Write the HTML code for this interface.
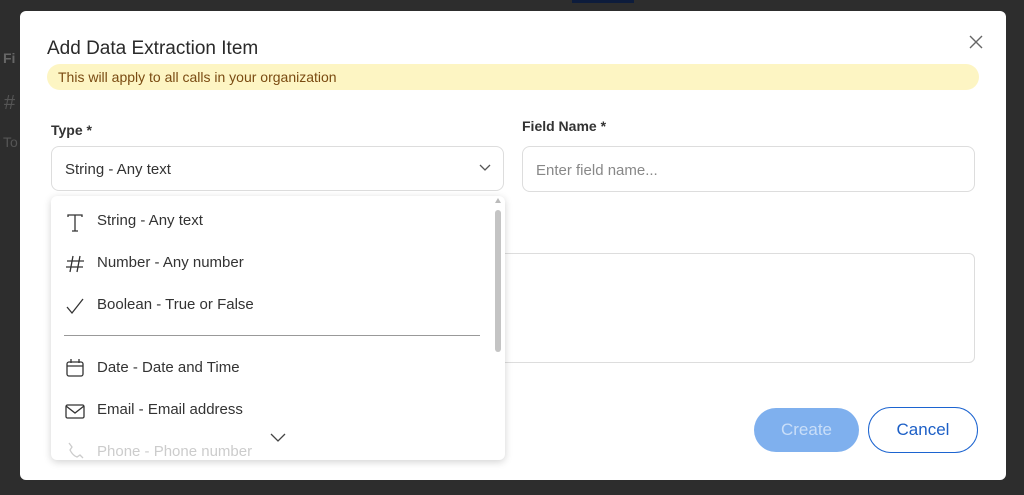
<!DOCTYPE html>
<html><head><style>
*{box-sizing:border-box;margin:0;padding:0}
body{width:1024px;height:495px;background:#2d2d2d;font-family:"Liberation Sans",sans-serif;position:relative;overflow:hidden}
.bgt{position:absolute;color:#555;font-size:14px}
.modal{position:absolute;left:20px;top:11px;width:986px;height:469px;background:#fff;border-radius:6px}
.a{position:absolute}
h1{position:absolute;left:27px;top:27px;font-size:19px;font-weight:normal;color:#2a2a2a}
.banner{left:27px;top:53px;width:932px;height:26px;background:#fdf5c3;border-radius:13px;color:#7a4b12;font-size:14px;padding:5px 11px}
.lbl{font-size:14px;font-weight:bold;color:#333}
.inp{border:1px solid #ddd;border-radius:8px;background:#fff}
.dd{left:31px;top:185px;width:454px;height:264px;background:#fff;border-radius:6px;box-shadow:0 2px 8px rgba(0,0,0,.18);overflow:hidden}
.it{position:absolute;left:46px;font-size:15px;color:#333}
.ic{position:absolute;left:14px}
</style></head><body>
<div class="bgt" style="left:3px;top:50px;font-weight:bold;color:#666">Fi</div>
<div class="bgt" style="left:4px;top:92px;font-size:20px">#</div>
<div class="bgt" style="left:3px;top:134px">To</div>
<div class="a" style="left:572px;top:0;width:62px;height:3px;background:#0d1c3c"></div>
<div class="modal">
<h1>Add Data Extraction Item</h1>
<svg class="a" style="left:948px;top:23px" width="16" height="16" viewBox="0 0 16 16"><path d="M2 2L14 14M14 2L2 14" stroke="#666" stroke-width="1.4"/></svg>
<div class="a banner">This will apply to all calls in your organization</div>
<div class="a lbl" style="left:31px;top:111px">Type *</div>
<div class="a inp" style="left:31px;top:135px;width:453px;height:45px;padding:14px 13px;font-size:15px;color:#333">String - Any text</div>
<svg class="a" style="left:459px;top:153px" width="12" height="8" viewBox="0 0 12 8"><path d="M1 1L6 6L11 1" stroke="#555" stroke-width="1.3" fill="none"/></svg>
<div class="a lbl" style="left:502px;top:107px">Field Name *</div>
<div class="a inp" style="left:502px;top:135px;width:453px;height:46px;padding:15px 13px;font-size:15px;color:#888">Enter field name...</div>
<div class="a inp" style="left:31px;top:242px;width:924px;height:110px;border-radius:6px"></div>
<div class="a" style="left:734px;top:397px;width:105px;height:44px;border-radius:22px;background:#7fb0ee;color:#c9def8;font-size:17px;text-align:center;line-height:44px">Create</div>
<div class="a" style="left:848px;top:396px;width:110px;height:46px;border-radius:23px;border:1.3px solid #1c64d0;color:#1c5fc6;font-size:17px;text-align:center;line-height:43px">Cancel</div>
<div class="a dd">
<svg class="ic" style="top:17px" width="20" height="20" viewBox="0 0 20 20"><path d="M3 4V2H17V4M10 2V18M7 18H13" stroke="#333" stroke-width="1.3" fill="none"/></svg>
<div class="it" style="top:16px">String - Any text</div>
<svg class="ic" style="top:58px" width="20" height="20" viewBox="0 0 20 20"><path d="M8 2L5 18M15 2L12 18M2 7H19M1 13H18" stroke="#333" stroke-width="1.3" fill="none"/></svg>
<div class="it" style="top:58px">Number - Any number</div>
<svg class="ic" style="top:100px" width="20" height="20" viewBox="0 0 20 20"><path d="M2 11L7 17L18 3" stroke="#333" stroke-width="1.3" fill="none"/></svg>
<div class="it" style="top:100px">Boolean - True or False</div>
<div class="a" style="left:13px;top:139px;width:416px;height:1px;background:#999"></div>
<svg class="ic" style="top:162px" width="20" height="20" viewBox="0 0 20 20"><rect x="2" y="4" width="16" height="14" rx="2" stroke="#333" stroke-width="1.3" fill="none"/><path d="M2 8H18M6 1V5M14 1V5" stroke="#333" stroke-width="1.3"/></svg>
<div class="it" style="top:163px">Date - Date and Time</div>
<svg class="ic" style="top:205px" width="20" height="20" viewBox="0 0 20 20"><rect x="1" y="4" width="18" height="13" rx="1.5" stroke="#333" stroke-width="1.3" fill="none"/><path d="M1 5L10 12L19 5" stroke="#333" stroke-width="1.3" fill="none"/></svg>
<div class="it" style="top:205px">Email - Email address</div>
<svg class="ic" style="top:245px" width="20" height="20" viewBox="0 0 20 20"><path d="M4 2L7 6L5 9C7 13 9 15 12 16L15 14L18 17" stroke="#ccc" stroke-width="1.3" fill="none"/></svg>
<div class="it" style="top:247px;color:#ccc">Phone - Phone number</div>
<svg class="a" style="left:219px;top:237px" width="16" height="10" viewBox="0 0 16 10"><path d="M1 1L8 8L15 1" stroke="#444" stroke-width="1.3" fill="none"/></svg>
<div class="a" style="left:444px;top:14px;width:6px;height:142px;background:#c4c4c4;border-radius:3px"></div>
<div class="a" style="left:444px;top:2px;width:0;height:0;border-left:3px solid transparent;border-right:3px solid transparent;border-bottom:5px solid #bbb"></div>
</div>
</div>
</body></html>
